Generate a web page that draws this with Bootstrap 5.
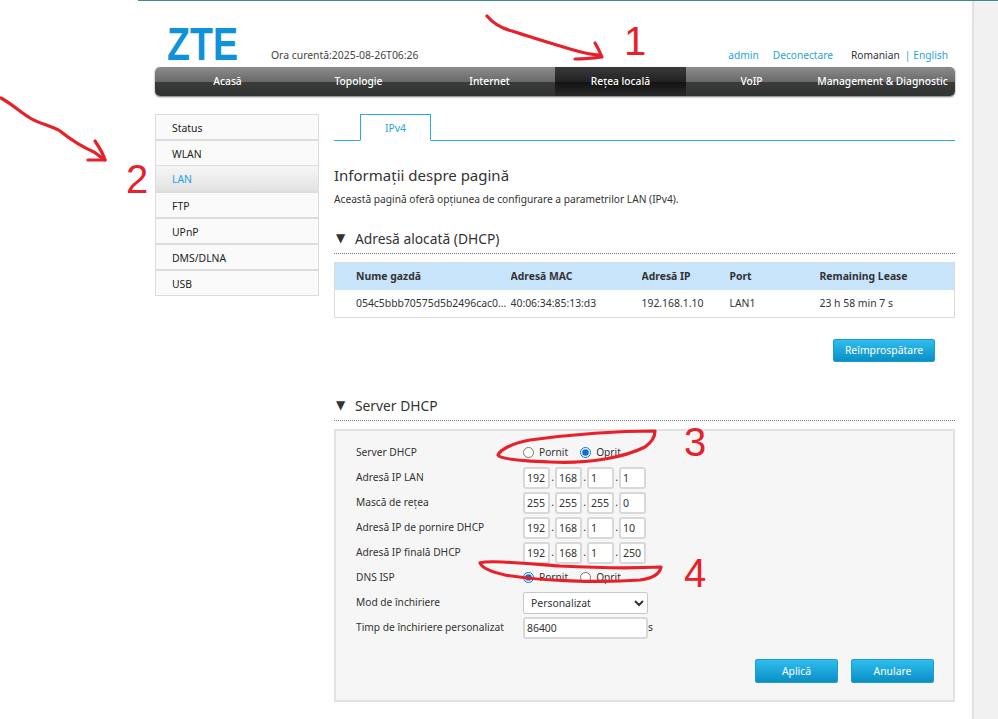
<!DOCTYPE html>
<html lang="ro">
<head>
<meta charset="utf-8">
<title>ZTE</title>
<link href="https://cdn.jsdelivr.net/npm/bootstrap@5.3.0/dist/css/bootstrap.min.css" rel="stylesheet">
<style>
html,body{margin:0;height:719px;overflow:hidden;background:#fff}
body{font-family:"Noto Sans","Open Sans",sans-serif;font-size:10.2px;line-height:1.2;color:#333}
.shot{position:relative;width:998px;height:719px;overflow:hidden}
.topline{height:1px;margin-left:138px;background:#3f8a92}
.shell{height:718px}
.pagearea{width:972px;padding-left:155px;flex:none}
.gutter{flex:1;background:#f1f1f1;border-left:2px solid #e2e2e2}
.inner{width:800px}
.headrow{height:66px;position:relative}
.logo{display:block;margin-left:12px;margin-top:16px;width:72px;height:54px;flex:none;overflow:visible}
.logo text{font-family:"Liberation Sans",sans-serif;font-size:47px;fill:#0e93da;font-weight:700}
.clock{margin-left:32px;margin-top:48px;font-size:10.4px;color:#444}
.toplinks{margin-left:auto;margin-top:48px;padding-right:7px;font-size:10.2px}
.toplinks a{color:#29a3d9;text-decoration:none}
.toplinks .gap1{margin-left:14px}
.toplinks .gap2{margin-left:18px;color:#333}
.toplinks .pipe{margin:0 3px 0 5px;color:#29a3d9}
.mainnav{height:29px;border-radius:5px;padding:0 7px;background:linear-gradient(#8c8c8c 0,#6a6a6a 50%,#3a3b3b 50%,#323333 100%);box-shadow:0 1px 2px rgba(0,0,0,.55);flex-wrap:nowrap}
.mainnav .nav-link{flex:0 0 131px;padding:0;height:29px;line-height:29px;text-align:center;color:#fff;font-size:10.25px;font-weight:500;white-space:nowrap}
.mainnav .nav-link.active{background:linear-gradient(#3a3a3a 0,#222 50%,#111 50%,#2a2a2a 100%);color:#fff}
.bodyrow{margin-top:18px}
.sidemenu{width:164px;flex:none;border-radius:0;background:#fafafa}
.sidemenu .list-group-item{height:26px;line-height:26px;padding:0 0 0 16px;border:1px solid #dcdcdc;background:#fafafa;color:#222;font-size:10.4px;border-radius:0}
.sidemenu .list-group-item + .list-group-item.active{background:linear-gradient(#f6f6f6,#e2e2e2);color:#29a3d9;margin-top:0;border-top-width:0}
.content{margin-left:15px;width:621px;flex:none}
.tabstrip{height:27px;border-bottom:1px solid #29abe2;padding-left:26px;border-radius:0}
.tabstrip .nav-link{width:71px;height:27px;padding:0;line-height:26px;text-align:center;border:1px solid #29abe2;border-bottom-color:#fff;border-radius:0;color:#29a3d9;font-size:10.4px;background:#fff}
.pagetitle{font-size:15px;font-weight:400;margin:24px 0 0;line-height:20px;color:#333}
.pagedesc{margin:7px 0 0;font-size:10.2px;line-height:14px;color:#333}
.sechead{height:25px;border-bottom:1px dotted #777;font-size:13.8px;line-height:20px;color:#333}
.sechead.first{margin-top:23px}
.sechead.second{margin-top:34px}
.tri{width:21px;padding-left:2px;font-size:12px;line-height:19px;flex:none;font-family:"DejaVu Sans",sans-serif;color:#333}
.leases{margin:8px 0 0;width:621px;table-layout:fixed;border:1px solid #dcdcdc;font-size:10.4px;--bs-table-bg:transparent}
.leases th,.leases td{padding:0;border:0;vertical-align:middle;color:#333;white-space:nowrap;overflow:hidden}
.leases thead tr{height:27px;background:#c7e4fb}
.leases tbody tr{height:28px;background:#fff}
.leases .c1{width:176px;padding-left:21px}.leases .c2{width:131px}.leases .c3{width:88px}.leases .c4{width:90px}
.actbtn{height:24px;padding:0;border:1px solid #1a9fd3;border-radius:2px;background:linear-gradient(#2fbdf0,#0a8fc4);color:#fff;font-size:10.4px;line-height:22px;width:83px;flex:none}
.refreshbar{margin-top:21px;padding-right:20px}
.refreshbar .actbtn{width:102px;height:23px;line-height:21px}
.formpanel{margin-top:8px;height:273px;border:2px solid #e2e2e2;background:#f6f6f6;padding:9px 20px 0}
.frow{height:25px;font-size:10.2px}
.flabel{width:167px;flex:none}
.frow input[type=radio]{width:11px;height:11px;margin:0;accent-color:#0a6fd0}
.radiotxt{margin-left:5px}
.radio2{margin-left:12px!important}
.ipbox{width:27px;height:22px;padding:0 0 0 2px;border:2px solid #d8d8d8;border-radius:3px;background:#fff;font-size:10.6px;color:#333}
.ipdot{width:5px;text-align:center;flex:none}
.selectbox{width:125px;height:22px;padding:0 0 0 3px;border:1px solid #c8c8c8;border-radius:2px;font-size:10.4px;color:#333;background-color:#fff}
.textbox{width:125px;height:22px;padding:0 0 0 2px;border:2px solid #d8d8d8;border-radius:3px;background:#fff;font-size:10.4px;color:#333}
.formbtns{margin-top:19px;gap:13px;padding-left:399px}
.ink{position:absolute;left:0;top:0;width:998px;height:719px;pointer-events:none}
.ink path{fill:none;stroke:#e8202a;stroke-width:3.2;stroke-linecap:round;stroke-linejoin:round}
.ink text{font-family:"Liberation Sans",sans-serif;font-size:40px;fill:#e8202a}
</style>
</head>
<body>
<div class="shot">
  <div class="topline"></div>
  <div class="shell d-flex">
    <div class="pagearea">
      <div class="inner">
        <div class="headrow d-flex">
          <svg class="logo" viewBox="0 0 72 54"><text x="0" y="43" textLength="71" lengthAdjust="spacingAndGlyphs">ZTE</text></svg>
          <div class="clock">Ora curentă:2025-08-26T06:26</div>
          <div class="toplinks"><a href="#">admin</a><a href="#" class="gap1">Deconectare</a><span class="gap2">Romanian</span><span class="pipe">|</span><a href="#">English</a></div>
        </div>
        <nav class="nav mainnav">
          <a class="nav-link" href="#">Acasă</a>
          <a class="nav-link" href="#">Topologie</a>
          <a class="nav-link" href="#">Internet</a>
          <a class="nav-link active" href="#">Rețea locală</a>
          <a class="nav-link" href="#">VoIP</a>
          <a class="nav-link" href="#">Management &amp; Diagnostic</a>
        </nav>
        <div class="bodyrow d-flex align-items-start">
          <div class="list-group sidemenu">
            <a class="list-group-item" href="#">Status</a>
            <a class="list-group-item" href="#">WLAN</a>
            <a class="list-group-item active" href="#">LAN</a>
            <a class="list-group-item" href="#">FTP</a>
            <a class="list-group-item" href="#">UPnP</a>
            <a class="list-group-item" href="#">DMS/DLNA</a>
            <a class="list-group-item" href="#">USB</a>
          </div>
          <div class="content">
            <div class="nav tabstrip"><a class="nav-link active" href="#">IPv4</a></div>
            <h1 class="pagetitle">Informații despre pagină</h1>
            <p class="pagedesc">Această pagină oferă opțiunea de configurare a parametrilor LAN (IPv4).</p>
            <div class="sechead first d-flex"><span class="tri">▼</span><span>Adresă alocată (DHCP)</span></div>
            <table class="table leases">
              <thead><tr><th class="c1">Nume gazdă</th><th class="c2">Adresă MAC</th><th class="c3">Adresă IP</th><th class="c4">Port</th><th>Remaining Lease</th></tr></thead>
              <tbody><tr><td class="c1">054c5bbb70575d5b2496cac0...</td><td>40:06:34:85:13:d3</td><td>192.168.1.10</td><td>LAN1</td><td>23 h 58 min 7 s</td></tr></tbody>
            </table>
            <div class="refreshbar d-flex justify-content-end"><button class="btn actbtn" type="button">Reîmprospătare</button></div>
            <div class="sechead second d-flex"><span class="tri">▼</span><span>Server DHCP</span></div>
            <div class="formpanel">
              <div class="frow d-flex align-items-center"><span class="flabel">Server DHCP</span><input type="radio" name="srv"><span class="radiotxt">Pornit</span><input class="radio2" type="radio" name="srv" checked><span class="radiotxt">Oprit</span></div>
              <div class="frow d-flex align-items-center"><span class="flabel">Adresă IP LAN</span><input class="ipbox" value="192"><span class="ipdot">.</span><input class="ipbox" value="168"><span class="ipdot">.</span><input class="ipbox" value="1"><span class="ipdot">.</span><input class="ipbox" value="1"></div>
              <div class="frow d-flex align-items-center"><span class="flabel">Mască de rețea</span><input class="ipbox" value="255"><span class="ipdot">.</span><input class="ipbox" value="255"><span class="ipdot">.</span><input class="ipbox" value="255"><span class="ipdot">.</span><input class="ipbox" value="0"></div>
              <div class="frow d-flex align-items-center"><span class="flabel">Adresă IP de pornire DHCP</span><input class="ipbox" value="192"><span class="ipdot">.</span><input class="ipbox" value="168"><span class="ipdot">.</span><input class="ipbox" value="1"><span class="ipdot">.</span><input class="ipbox" value="10"></div>
              <div class="frow d-flex align-items-center"><span class="flabel">Adresă IP finală DHCP</span><input class="ipbox" value="192"><span class="ipdot">.</span><input class="ipbox" value="168"><span class="ipdot">.</span><input class="ipbox" value="1"><span class="ipdot">.</span><input class="ipbox" value="250"></div>
              <div class="frow d-flex align-items-center"><span class="flabel">DNS ISP</span><input type="radio" name="dns" checked><span class="radiotxt">Pornit</span><input class="radio2" type="radio" name="dns"><span class="radiotxt">Oprit</span></div>
              <div class="frow d-flex align-items-center"><span class="flabel">Mod de închiriere</span><select class="selectbox"><option>Personalizat</option></select></div>
              <div class="frow d-flex align-items-center"><span class="flabel">Timp de închiriere personalizat</span><input class="textbox" value="86400"><span>s</span></div>
              <div class="formbtns d-flex"><button class="btn actbtn" type="button">Aplică</button><button class="btn actbtn" type="button">Anulare</button></div>
            </div>
          </div>
        </div>
      </div>
    </div>
    <div class="gutter"></div>
  </div>
  <svg class="ink" viewBox="0 0 998 719">
    <path d="M487 16C492 22 500 28 512 31C530 37 550 43 570 49C580 52 590 55 600 55"/>
    <path d="M595 43C598 48 600 52 602 57C594 58 584 59 575 59"/>
    <path d="M1 98C12 104 20 112 30 118C40 124 52 126 60 131C70 139 80 146 94 152C98 155 102 158 105 160"/>
    <path d="M95 141C99 147 103 153 105 160C99 160 94 160 88 160"/>
    <path d="M655 431C620 431 575 434 530 440C512 443 500 450 498 455C500 459 520 461 550 462C590 464 625 457 645 447C652 442 655 437 655 431"/>
    <path d="M480 563C488 560 520 563 560 566C600 568 640 568 661 567C660 573 655 578 640 580C600 583 540 581 505 575C492 572 482 568 480 563"/>
    <text x="624" y="55">1</text>
    <text x="126" y="193">2</text>
    <text x="684" y="456">3</text>
    <text x="684" y="587">4</text>
  </svg>
</div>
</body>
</html>
